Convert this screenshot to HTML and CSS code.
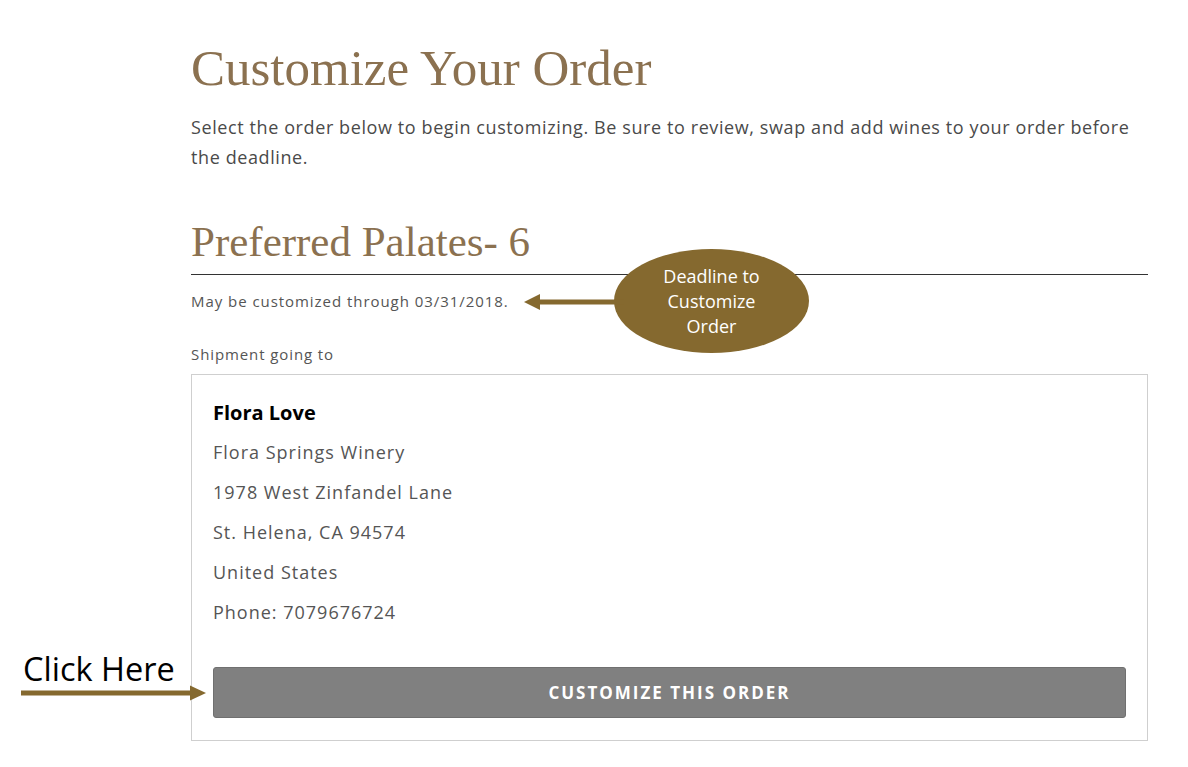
FILE: index.html
```html
<!DOCTYPE html>
<html>
<head>
<meta charset="utf-8">
<link rel="stylesheet" href="styles.css">
</head>
<body>
<main class="page">
  <h1 class="title">Customize Your Order</h1>
  <p class="intro">Select the order below to begin customizing. Be sure to review, swap and add wines to your order before the deadline.</p>
  <h2 class="club">Preferred Palates- 6</h2>
  <p class="deadline">May be customized through 03/31/2018.</p>
  <p class="ship-label">Shipment going to</p>
  <section class="card">
    <div class="name">Flora Love</div>
    <div class="line">Flora Springs Winery</div>
    <div class="line">1978 West Zinfandel Lane</div>
    <div class="line">St. Helena, CA 94574</div>
    <div class="line">United States</div>
    <div class="line">Phone: 7079676724</div>
    <button class="btn">CUSTOMIZE THIS ORDER</button>
  </section>
</main>

<div class="callout">Deadline to<br>Customize<br>Order</div>
<svg class="arrow arrow-deadline" width="100" height="20" viewBox="0 0 100 20">
  <line x1="14" y1="10" x2="100" y2="10" stroke="#85692f" stroke-width="5"/>
  <polygon points="0,10 16,2 16,18" fill="#85692f"/>
</svg>
<div class="click-here">Click Here</div>
<svg class="arrow arrow-click" width="190" height="20" viewBox="0 0 190 20">
  <line x1="0" y1="10" x2="172" y2="10" stroke="#85692f" stroke-width="5"/>
  <polygon points="185,10 169,2.5 169,17.5" fill="#85692f"/>
</svg>
</body>
</html>
```

FILE: styles.css
```css
html, body { margin: 0; padding: 0; background: #fff; }
body { position: relative; width: 1188px; height: 767px; overflow: hidden; }

.page {
  width: 957px;
  margin-left: 191px;
  padding-top: 40px;
  font-family: "Open Sans", Lato, sans-serif;
  color: #4a4a4a;
}

.title {
  margin: 0;
  font-family: "Liberation Serif", "Times New Roman", serif;
  font-weight: normal;
  font-size: 51px;
  line-height: 56px;
  color: #8b7150;
}

.intro {
  margin: 16px 0 0;
  font-size: 18px;
  line-height: 30px;
  letter-spacing: 0.6px;
  color: #4a4a4a;
}

.club {
  margin: 46px 0 0;
  font-family: "Liberation Serif", "Times New Roman", serif;
  font-weight: normal;
  font-size: 43px;
  line-height: 48px;
  color: #8b7150;
  padding-bottom: 8px;
  border-bottom: 1px solid #333;
}

.deadline {
  margin: 16px 0 0;
  font-size: 15px;
  line-height: 20px;
  letter-spacing: 0.95px;
  color: #555;
}

.ship-label {
  margin: 33px 0 0;
  font-size: 15px;
  line-height: 20px;
  letter-spacing: 0.9px;
  color: #555;
}

.card {
  margin-top: 10px;
  border: 1px solid #cfcfcf;
  padding: 24px 21px 22px;
  display: flex;
  flex-direction: column;
}

.name {
  font-family: "Open Sans", sans-serif;
  font-weight: bold;
  font-size: 20px;
  line-height: 28px;
  color: #000;
  margin-bottom: 5px;
}

.line {
  font-size: 18px;
  line-height: 40px;
  letter-spacing: 1px;
  color: #555;
}

.btn {
  margin-top: 35px;
  height: 51px;
  border: 1px solid #707070;
  border-radius: 3px;
  background: #808080;
  color: #fff;
  font-family: "Open Sans", sans-serif;
  font-weight: bold;
  font-size: 17px;
  letter-spacing: 2px;
}

.callout {
  position: absolute;
  left: 614px;
  top: 249px;
  width: 195px;
  height: 104px;
  border-radius: 50%;
  background: #85692f;
  color: #fff;
  font-family: "Open Sans", sans-serif;
  font-size: 18px;
  line-height: 25px;
  text-align: center;
  display: flex;
  align-items: center;
  justify-content: center;
}

.arrow { position: absolute; }
.arrow-deadline { left: 524px; top: 292px; }
.arrow-click { left: 21px; top: 683px; }

.click-here {
  position: absolute;
  left: 23px;
  top: 649px;
  font-family: "Open Sans", sans-serif;
  font-size: 32.5px;
  line-height: 40px;
  color: #000;
}
```
